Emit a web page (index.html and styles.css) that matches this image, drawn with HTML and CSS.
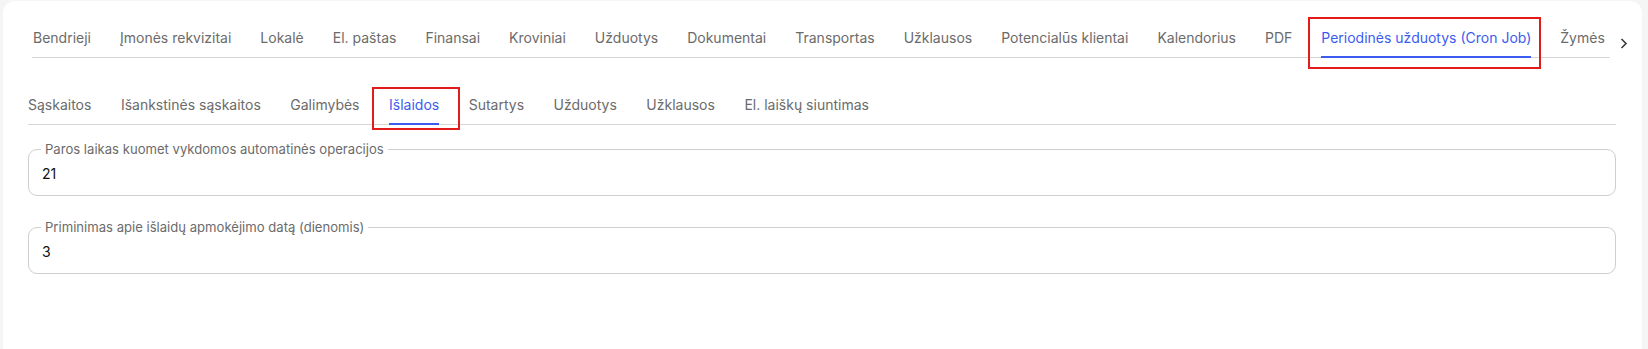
FILE: index.html
```html
<!DOCTYPE html>
<html lang="lt">
<head>
<meta charset="utf-8">
<title>Nustatymai</title>
<link rel="stylesheet" href="styles.css">
</head>
<body>
<div class="card">
  <div class="top-row">
    <nav class="tabs tabs-main">
      <span class="tab">Bendrieji</span>
      <span class="tab">Įmonės rekvizitai</span>
      <span class="tab">Lokalė</span>
      <span class="tab">El. paštas</span>
      <span class="tab">Finansai</span>
      <span class="tab">Kroviniai</span>
      <span class="tab">Užduotys</span>
      <span class="tab">Dokumentai</span>
      <span class="tab">Transportas</span>
      <span class="tab">Užklausos</span>
      <span class="tab">Potencialūs klientai</span>
      <span class="tab">Kalendorius</span>
      <span class="tab">PDF</span>
      <span class="tab active mark-main">Periodinės užduotys (Cron Job)</span>
      <span class="tab">Žymės</span>
    </nav>
    <button class="scroll-btn" type="button" aria-label="Toliau">
      <svg width="8" height="11" viewBox="0 0 8 11"><path d="M1.5 1 L6 5.5 L1.5 10" fill="none" stroke="#3a3a3a" stroke-width="1.6"/></svg>
    </button>
  </div>

  <nav class="tabs tabs-sub">
    <span class="tab">Sąskaitos</span>
    <span class="tab">Išankstinės sąskaitos</span>
    <span class="tab">Galimybės</span>
    <span class="tab active mark-sub">Išlaidos</span>
    <span class="tab">Sutartys</span>
    <span class="tab">Užduotys</span>
    <span class="tab">Užklausos</span>
    <span class="tab">El. laiškų siuntimas</span>
  </nav>

  <div class="fields">
    <fieldset class="field">
      <legend>Paros laikas kuomet vykdomos automatinės operacijos</legend>
      <div class="value">21</div>
    </fieldset>
    <fieldset class="field">
      <legend>Priminimas apie išlaidų apmokėjimo datą (dienomis)</legend>
      <div class="value">3</div>
    </fieldset>
  </div>
</div>
</body>
</html>
```

FILE: styles.css
```css
* { box-sizing: border-box; }

html, body {
  margin: 0;
  padding: 0;
}

body {
  background: #f5f5f6;
  font-family: Inter, "Noto Sans", sans-serif;
  color: #1a1a1a;
  height: 349px;
  overflow: hidden;
}

.card {
  margin: 1px 6px 0 3px;
  background: #ffffff;
  border-radius: 12px;
  padding: 27px 26px 60px 25px;
  min-height: 360px;
}

.top-row {
  display: flex;
  align-items: flex-start;
  margin: 0 -16px 0 4px;
}

.tabs {
  display: flex;
  gap: 29px;
  white-space: nowrap;
  background: linear-gradient(#d6d6d6, #d6d6d6) left bottom / 100% 1px no-repeat;
}

.tabs-main {
  flex: 1;
  min-width: 0;
}

.tabs-main .tab:first-child { margin-left: 1px; }

.tab {
  position: relative;
  flex: none;
  font-size: 14px;
  line-height: 20px;
  color: #6b6b6b;
  padding-bottom: 8px;
  border-bottom: 2px solid transparent;
}

.tab.active {
  color: #3c5cf0;
  border-bottom-color: #3c5cf0;
}

.scroll-btn {
  flex: none;
  width: 22px;
  height: 30px;
  margin: 0;
  padding: 10px 0 0 10px;
  border: 0;
  background: transparent;
  display: flex;
  align-items: flex-start;
}

.tabs-sub {
  margin-top: 37px;
  gap: 29.5px;
}

.mark-main::after,
.mark-sub::after {
  content: "";
  position: absolute;
  border: 2px solid #e31b1b;
  pointer-events: none;
}

.mark-main::after {
  left: -13px;
  right: -10px;
  top: -11px;
  bottom: -13px;
}

.mark-sub::after {
  left: -17px;
  right: -21px;
  top: -8px;
  bottom: -7px;
}

.fields {
  display: flex;
  flex-direction: column;
  gap: 23px;
  margin-top: 16px;
}

.field {
  margin: 0;
  border: 1px solid #cfcfcf;
  border-radius: 9px;
  padding: 7px 13px 11px 13px;
  min-width: 0;
}

.field legend {
  padding: 0 4px;
  margin-left: -1px;
  font-size: 13.1px;
  line-height: 16px;
  color: #6b6b6b;
}

.value {
  font-size: 14px;
  line-height: 20px;
  color: #111111;
}
```
